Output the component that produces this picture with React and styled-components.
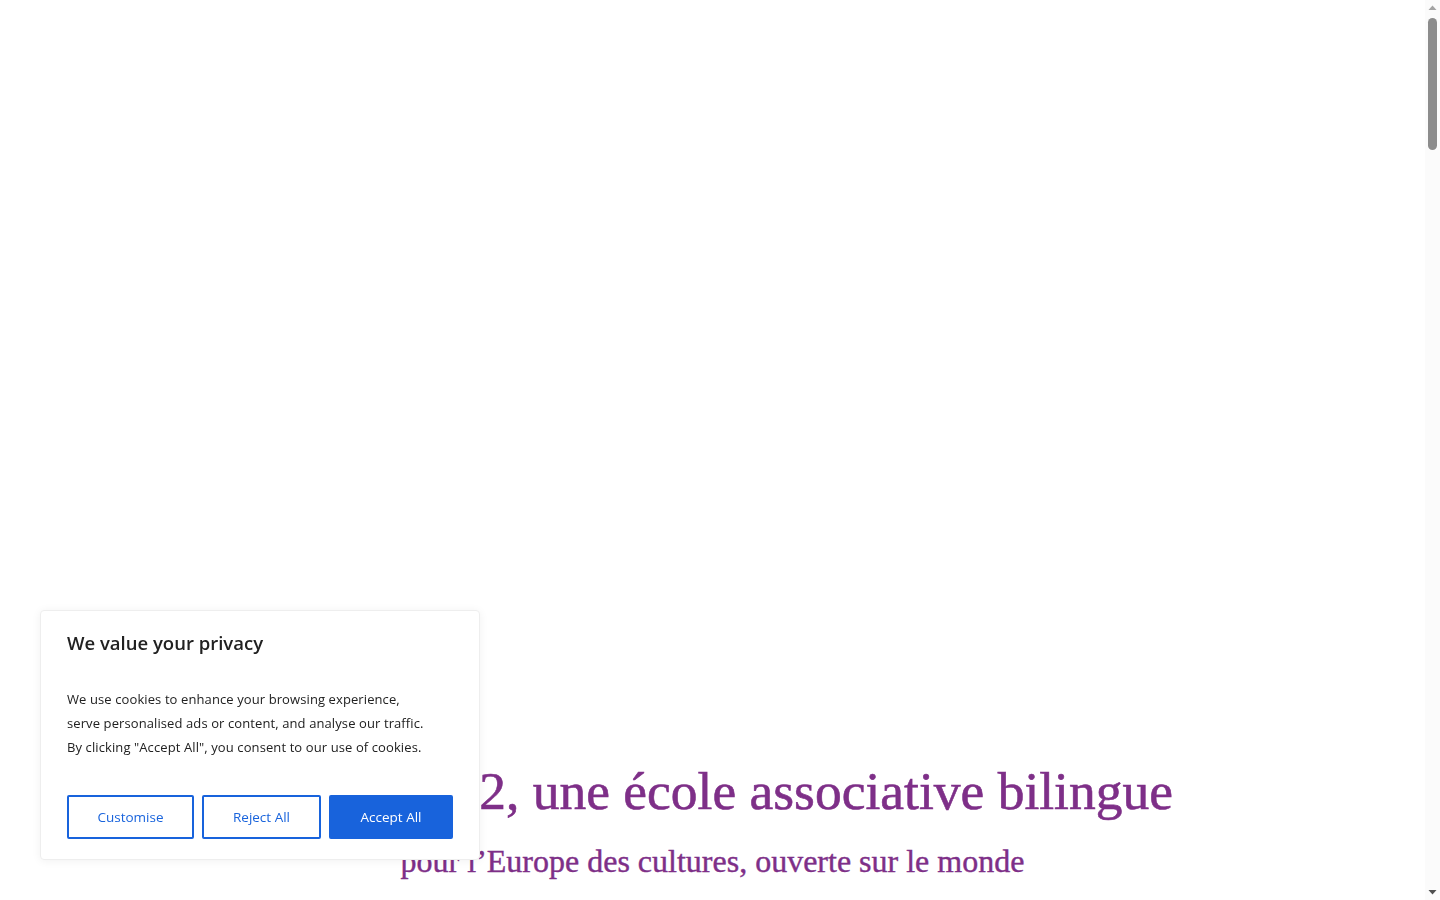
import React from "react";
import styled, { createGlobalStyle } from "styled-components";

const Global = createGlobalStyle`
  html, body { margin: 0; padding: 0; background: #ffffff; }
  body { font-family: "Liberation Serif", serif; }
  html::-webkit-scrollbar { display: none; }
  * { box-sizing: border-box; }
`;

const Page = styled.div`
  display: flex;
  flex-direction: column;
  min-height: 6000px;
  margin-right: 15px;
`;

const Hero = styled.section`
  height: 760px;
  background: #ffffff;
`;

const Intro = styled.section`
  display: flex;
  flex-direction: column;
  align-items: center;
  text-align: center;
  gap: 18px;
`;

const Headline = styled.h1`
  margin: 0;
  padding-right: 18px;
  font-family: "Liberation Serif", "Times New Roman", serif;
  font-weight: 400;
  font-size: 53.5px;
  line-height: 62px;
  color: #7e2f88;
  -webkit-text-stroke: 0.6px #7e2f88;
  white-space: nowrap;
`;

const Subline = styled.h2`
  margin: 0;
  font-family: "Liberation Serif", "Times New Roman", serif;
  font-weight: 400;
  font-size: 32px;
  line-height: 42px;
  color: #7e2f88;
  -webkit-text-stroke: 0.4px #7e2f88;
  white-space: nowrap;
`;

const Banner = styled.div`
  position: fixed;
  left: 40px;
  bottom: 40px;
  width: 440px;
  padding: 20px 26px 20px;
  background: #ffffff;
  border: 1px solid #eeeeee;
  border-radius: 4px;
  box-shadow: 0 1px 10px rgba(0, 0, 0, 0.06);
  font-family: "Open Sans", "Noto Sans", sans-serif;
  display: flex;
  flex-direction: column;
  z-index: 10;
`;

const BannerTitle = styled.p`
  margin: 0;
  font-size: 18.5px;
  line-height: 24px;
  font-weight: 600;
  color: #212121;
`;

const BannerText = styled.p`
  margin: 32px 0 0;
  font-size: 13px;
  line-height: 24px;
  color: #212121;
  letter-spacing: 0.1px;
`;

const Line = styled.span`
  display: block;
  white-space: nowrap;
`;

const Buttons = styled.div`
  display: flex;
  gap: 8px;
  margin-top: 36px;
`;

const Btn = styled.button`
  height: 44px;
  width: ${(p) => p.$w}px;
  border: 2px solid #1863dc;
  border-radius: 2px;
  background: ${(p) => (p.$primary ? "#1863dc" : "#ffffff")};
  color: ${(p) => (p.$primary ? "#ffffff" : "#1863dc")};
  font-family: "Open Sans", "Noto Sans", sans-serif;
  font-size: 13.5px;
  font-weight: 400;
  cursor: pointer;
  padding: 0;
`;

const ScrollTrack = styled.div`
  position: fixed;
  top: 0;
  right: 0;
  width: 15px;
  height: 100vh;
  background: #fbfbfb;
  display: flex;
  flex-direction: column;
  align-items: center;
  justify-content: space-between;
  z-index: 20;
`;

const Arrow = styled.svg`
  display: block;
  width: 15px;
  height: 15px;
  flex: none;
`;

const TrackBody = styled.div`
  flex: 1;
  width: 100%;
  display: flex;
  justify-content: center;
  padding-top: 3px;
`;

const Thumb = styled.div`
  width: 9px;
  height: 132px;
  border-radius: 5px;
  background: #8c8c8c;
`;

export default function App() {
  return (
    <>
      <Global />
      <Page>
        <Hero />
        <Intro>
          <Headline>Depuis 2002, une école associative bilingue</Headline>
          <Subline>pour l’Europe des cultures, ouverte sur le monde</Subline>
        </Intro>
      </Page>
      <Banner role="dialog" aria-label="Cookie consent">
        <BannerTitle>We value your privacy</BannerTitle>
        <BannerText>
          <Line>We use cookies to enhance your browsing experience,</Line>
          <Line>serve personalised ads or content, and analyse our traffic.</Line>
          <Line>By clicking "Accept All", you consent to our use of cookies.</Line>
        </BannerText>
        <Buttons>
          <Btn $w={127}>Customise</Btn>
          <Btn $w={119}>Reject All</Btn>
          <Btn $w={124} $primary>Accept All</Btn>
        </Buttons>
      </Banner>
      <ScrollTrack aria-hidden="true">
        <Arrow viewBox="0 0 15 15">
          <path d="M3.5 10 L7.5 5.5 L11.5 10 Z" fill="#a3a3a3" />
        </Arrow>
        <TrackBody>
          <Thumb />
        </TrackBody>
        <Arrow viewBox="0 0 15 15">
          <path d="M3.5 5 L7.5 9.5 L11.5 5 Z" fill="#505050" />
        </Arrow>
      </ScrollTrack>
    </>
  );
}
